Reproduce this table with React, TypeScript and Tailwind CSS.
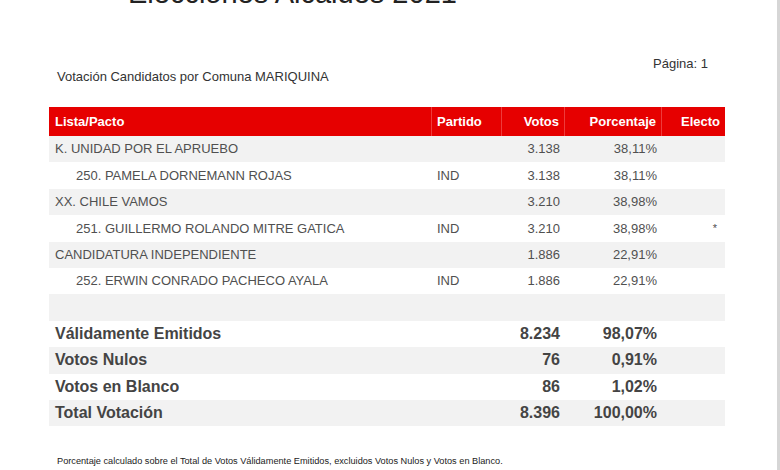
const rows = [
  { name: "K. UNIDAD POR EL APRUEBO", partido: "", votos: "3.138", pct: "38,11%", electo: "", sub: false },
  { name: "250. PAMELA DORNEMANN ROJAS", partido: "IND", votos: "3.138", pct: "38,11%", electo: "", sub: true },
  { name: "XX. CHILE VAMOS", partido: "", votos: "3.210", pct: "38,98%", electo: "", sub: false },
  { name: "251. GUILLERMO ROLANDO MITRE GATICA", partido: "IND", votos: "3.210", pct: "38,98%", electo: "*", sub: true },
  { name: "CANDIDATURA INDEPENDIENTE", partido: "", votos: "1.886", pct: "22,91%", electo: "", sub: false },
  { name: "252. ERWIN CONRADO PACHECO AYALA", partido: "IND", votos: "1.886", pct: "22,91%", electo: "", sub: true },
];

const totals = [
  { label: "Válidamente Emitidos", votos: "8.234", pct: "98,07%" },
  { label: "Votos Nulos", votos: "76", pct: "0,91%" },
  { label: "Votos en Blanco", votos: "86", pct: "1,02%" },
  { label: "Total Votación", votos: "8.396", pct: "100,00%" },
];

const cols = "grid grid-cols-[383px_70px_63px_97px_63px]";

const App = () => {
  return (
    <div className="flex h-[470px] w-[780px] overflow-hidden bg-white font-['Liberation_Sans',Arial,sans-serif]">
      <div className="flex-1">
        {/* Report title, cut off by the top edge */}
        <div className="-mt-[21px] pl-[128px] text-[29px] leading-[29px] text-[#222]">
          Elecciones Alcaldes 2021
        </div>

        {/* Subtitle + page number */}
        <div className="mt-[48px] flex h-[51px] w-[708px] items-start justify-between pl-[57px] text-[13px] leading-[15px] text-[#333]">
          <span className="mt-[13px]">Votación Candidatos por Comuna MARIQUINA</span>
          <span>Página: 1</span>
        </div>

        {/* Results table */}
        <div className="ml-[49px] w-[676px] text-[13px] text-[#505050]">
          <div className={`${cols} h-[29px] bg-[#e60000] font-bold text-white`}>
            <div className="flex items-center border-r border-[#ee3b3b] pl-[6px]">Lista/Pacto</div>
            <div className="flex items-center border-r border-[#ee3b3b] pl-[5px]">Partido</div>
            <div className="flex items-center justify-end border-r border-[#ee3b3b] pr-[5px]">Votos</div>
            <div className="flex items-center justify-end border-r border-[#ee3b3b] pr-[5px]">Porcentaje</div>
            <div className="flex items-center justify-end pr-[5px]">Electo</div>
          </div>

          {rows.map((r, i) => (
            <div key={i} className={`${cols} h-[26.4px] ${i % 2 === 0 ? "bg-[#f2f2f2]" : "bg-white"}`}>
              <div className={`flex items-center ${r.sub ? "pl-[27px]" : "pl-[6px]"}`}>{r.name}</div>
              <div className="flex items-center pl-[5px]">{r.partido}</div>
              <div className="flex items-center justify-end pr-[5px]">{r.votos}</div>
              <div className="flex items-center justify-end pr-[5px]">{r.pct}</div>
              <div className="flex items-start justify-end pt-[5px] pr-[8px] text-[11px]">{r.electo}</div>
            </div>
          ))}

          {/* Spacer row */}
          <div className="h-[26.4px] bg-[#f2f2f2]" />

          {totals.map((t, i) => (
            <div
              key={t.label}
              className={`${cols} h-[26.4px] text-[16px] font-bold text-[#444] ${i % 2 === 1 ? "bg-[#f2f2f2]" : "bg-white"}`}
            >
              <div className="col-span-2 flex items-center pl-[6px]">{t.label}</div>
              <div className="flex items-center justify-end pr-[5px]">{t.votos}</div>
              <div className="flex items-center justify-end pr-[5px]">{t.pct}</div>
              <div />
            </div>
          ))}
        </div>

        {/* Footnote */}
        <p className="mt-[30px] pl-[57px] text-[9.2px] leading-[11px] text-[#222]">
          Porcentaje calculado sobre el Total de Votos Válidamente Emitidos, excluidos Votos Nulos y Votos en Blanco.
        </p>
      </div>

      {/* Right page edge */}
      <div className="w-[3px] bg-[#d6d6d6]" />
    </div>
  );
};

export default App;
